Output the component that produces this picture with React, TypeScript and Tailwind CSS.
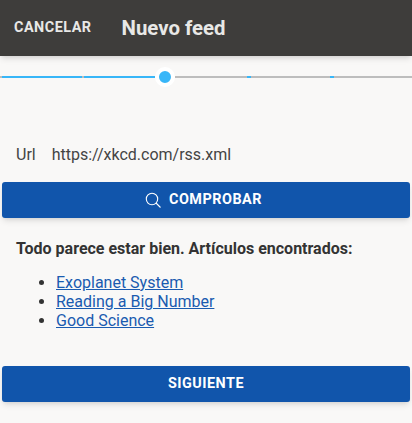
import React from "react";

function Search() {
  return (
    <svg width="16" height="16" viewBox="0 0 16 16" fill="none" stroke="#fff" strokeWidth="1.1" className="mr-[8px]">
      <circle cx="7" cy="7" r="5.7" />
      <path d="M11 11l4.5 4.5" />
    </svg>
  );
}

export default function App() {
  const items = ["Exoplanet System", "Reading a Big Number", "Good Science"];
  return (
    <div className="w-[412px] h-[423px] bg-[#f9f8f7] flex flex-col overflow-hidden text-[#333]" style={{ fontFamily: "Roboto, sans-serif" }}>
      <header className="h-[56px] bg-[#3e3d3b] flex items-center shadow-md shrink-0">
        <button className="ml-[14px] mb-[1px] text-[14.4px] font-bold tracking-[0.5px] text-[#e8e8e6]">CANCELAR</button>
        <h1 className="ml-[30px] text-[20.4px] font-bold text-[#e8e8e6]">Nuevo feed</h1>
      </header>
      <div className="mt-[14px] h-[14px] flex items-center shrink-0">
        <div className="w-[2px] h-[2px] bg-[#bdbdbd]" />
        <div className="w-[80px] h-[2px] bg-[#38b6f8]" />
        <div className="w-[2px] h-[2px] bg-[#bdbdbd]" />
        <div className="w-[71px] h-[2px] bg-[#38b6f8]" />
        <div className="w-[20px] h-[20px] rounded-full bg-[#38b6f8] border-[4px] border-[#ffffff] shrink-0 box-border" />
        <div className="w-[72px] h-[2px] bg-[#bdbdbd]" />
        <div className="w-[4px] h-[2px] bg-[#38b6f8]" />
        <div className="w-[79px] h-[2px] bg-[#bdbdbd]" />
        <div className="w-[4px] h-[2px] bg-[#38b6f8]" />
        <div className="flex-1 h-[2px] bg-[#bdbdbd]" />
      </div>
      <div className="mt-[59px] pl-[16px] h-[24px] flex items-center text-[16px] shrink-0 text-[#444]">
        <span>Url</span>
        <span className="ml-[16px]">https://xkcd.com/rss.xml</span>
      </div>
      <button className="mx-[2px] mt-[15px] h-[36px] pr-[5px] rounded-[3px] bg-[#1155ab] text-white text-[14.4px] font-bold tracking-[0.5px] flex items-center justify-center shadow-md shrink-0">
        <Search />
        COMPROBAR
      </button>
      <p className="mt-[21px] pl-[16px] text-[16px] font-bold leading-[19px] shrink-0">Todo parece estar bien. Artículos encontrados:</p>
      <ul className="mt-[15px] pl-[56px] list-disc text-[16px] leading-[19px] shrink-0">
        {items.map((t) => (
          <li key={t}>
            <a href="#" className="underline text-[#1a5bb0]">{t}</a>
          </li>
        ))}
      </ul>
      <button className="mx-[2px] mt-[36px] h-[36px] rounded-[3px] bg-[#1155ab] text-white text-[14.4px] font-bold tracking-[0.5px] shadow-md shrink-0">SIGUIENTE</button>
    </div>
  );
}
